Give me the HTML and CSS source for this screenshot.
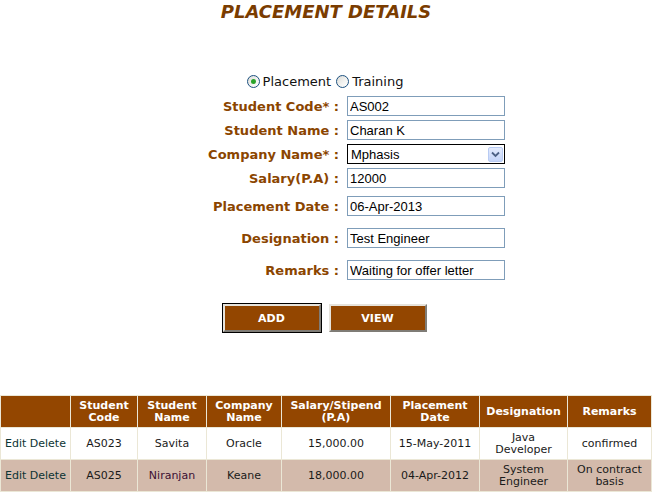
FILE: index.html
```html
<!DOCTYPE html>
<html>
<head>
<meta charset="utf-8">
<link rel="stylesheet" href="styles.css">
</head>
<body>
<h1 class="title">PLACEMENT DETAILS</h1>

<div class="radio-row">
  <span class="radio checked"></span><span class="radio-label">Placement</span>
  <span class="radio"></span><span class="radio-label">Training</span>
</div>

<div class="form">
  <label class="lbl">Student Code* :</label>
  <div class="field"><input class="txt" type="text" value="AS002"></div>

  <label class="lbl">Student Name :</label>
  <div class="field"><input class="txt" type="text" value="Charan K"></div>

  <label class="lbl">Company Name* :</label>
  <div class="field">
    <div class="select">
      <span class="select-text">Mphasis</span>
      <span class="select-btn">
        <svg width="9" height="7" viewBox="0 0 9 7"><path d="M1 1.5 L4.5 5 L8 1.5" fill="none" stroke="#4d6185" stroke-width="1.8"/></svg>
      </span>
    </div>
  </div>

  <label class="lbl">Salary(P.A) :</label>
  <div class="field"><input class="txt" type="text" value="12000"></div>

  <label class="lbl">Placement Date :</label>
  <div class="field"><input class="txt" type="text" value="06-Apr-2013"></div>

  <label class="lbl">Designation :</label>
  <div class="field"><input class="txt" type="text" value="Test Engineer"></div>

  <label class="lbl">Remarks :</label>
  <div class="field"><input class="txt" type="text" value="Waiting for offer letter"></div>
</div>

<div class="buttons">
  <button class="btn focus">ADD</button>
  <button class="btn">VIEW</button>
</div>

<table class="grid">
  <colgroup>
    <col class="c1"><col class="c2"><col class="c3"><col class="c4"><col class="c5"><col class="c6"><col class="c7"><col class="c8">
  </colgroup>
  <thead>
    <tr>
      <th></th>
      <th>Student<br>Code</th>
      <th>Student<br>Name</th>
      <th>Company<br>Name</th>
      <th>Salary/Stipend<br>(P.A)</th>
      <th>Placement<br>Date</th>
      <th>Designation</th>
      <th>Remarks</th>
    </tr>
  </thead>
  <tbody>
    <tr class="row">
      <td class="act">Edit Delete</td>
      <td>AS023</td>
      <td>Savita</td>
      <td>Oracle</td>
      <td>15,000.00</td>
      <td>15-May-2011</td>
      <td>Java<br>Developer</td>
      <td>confirmed</td>
    </tr>
    <tr class="row alt">
      <td class="act">Edit Delete</td>
      <td>AS025</td>
      <td class="visited">Niranjan</td>
      <td>Keane</td>
      <td>18,000.00</td>
      <td>04-Apr-2012</td>
      <td>System<br>Engineer</td>
      <td>On contract<br>basis</td>
    </tr>
  </tbody>
</table>
</body>
</html>
```

FILE: styles.css
```css
html, body {
  margin: 0;
  padding: 0;
  background: #ffffff;
}

body {
  font-family: "DejaVu Sans", Verdana, sans-serif;
  color: #000000;
  width: 652px;
}

.title {
  margin: 1px 0 0 0;
  height: 22px;
  line-height: 22px;
  font-size: 18px;
  font-weight: bold;
  font-style: italic;
  text-align: center;
  color: #7a3c00;
}

.radio-row {
  margin-top: 47px;
  height: 22px;
  display: flex;
  justify-content: center;
  align-items: center;
  font-size: 13px;
  color: #111111;
  padding-left: 3px;
}

.radio {
  width: 11px;
  height: 11px;
  border: 1px solid #1c5180;
  border-radius: 50%;
  background: linear-gradient(135deg, #dcdcd7 0%, #f4f4f2 60%, #ffffff 100%);
  position: relative;
  margin-right: 3px;
}

.radio.checked::after {
  content: "";
  position: absolute;
  left: 3px;
  top: 3px;
  width: 5px;
  height: 5px;
  border-radius: 50%;
  background: #29a329;
}

.radio-label {
  margin-right: 5px;
}

.form {
  margin-top: 2px;
  display: grid;
  grid-template-columns: 339px 158px;
  grid-template-rows: 24px 24px 24px 24px 32px 32px 32px;
  column-gap: 8px;
}

.lbl {
  display: flex;
  align-items: center;
  justify-content: flex-end;
  font-size: 13px;
  font-weight: bold;
  color: #8b4500;
  white-space: nowrap;
}

.field {
  display: flex;
  align-items: center;
}

.txt {
  box-sizing: border-box;
  width: 158px;
  height: 20px;
  margin: 0;
  padding: 0 2px;
  border: 1px solid #7f9db9;
  font-family: "Liberation Sans", Arial, sans-serif;
  font-size: 13px;
  color: #000000;
  background: #ffffff;
  outline: none;
}

.select {
  box-sizing: border-box;
  width: 158px;
  height: 20px;
  border: 1px solid #000000;
  display: flex;
  align-items: center;
  justify-content: space-between;
  padding: 0 1px 0 3px;
  font-family: "Liberation Sans", Arial, sans-serif;
  font-size: 13px;
}

.select-btn {
  width: 15px;
  height: 15px;
  box-sizing: border-box;
  border: 1px solid #b8cbf3;
  border-radius: 2px;
  background: linear-gradient(180deg, #e4ebfd 0%, #c4d4f8 100%);
  display: flex;
  align-items: center;
  justify-content: center;
}

.buttons {
  margin-top: 18px;
  display: flex;
  justify-content: center;
  gap: 8px;
  padding-right: 3px;
}

.btn {
  box-sizing: border-box;
  width: 98px;
  height: 28px;
  margin: 0;
  padding: 0;
  background: #934600;
  color: #ffffff;
  font-family: "DejaVu Sans", Verdana, sans-serif;
  font-size: 11px;
  font-weight: bold;
  border-style: solid;
  border-width: 2px;
  border-color: #e6e3dc #7f7c76 #7f7c76 #e6e3dc;
}

.btn.focus {
  outline: 1px solid #000000;
}

.grid {
  margin-top: 63px;
  width: 651px;
  table-layout: fixed;
  border-collapse: collapse;
  font-size: 11px;
}

.c1 { width: 70px; }
.c2 { width: 67px; }
.c3 { width: 69px; }
.c4 { width: 75px; }
.c5 { width: 109px; }
.c6 { width: 89px; }
.c7 { width: 88px; }
.c8 { width: 84px; }

.grid th, .grid td {
  border: 1px solid #ebe7d6;
  padding: 0 2px;
  text-align: center;
  vertical-align: middle;
  line-height: 12px;
}

.grid th {
  height: 31px;
  background: #934600;
  color: #ffffff;
  font-weight: bold;
}

.grid td {
  height: 31px;
  color: #1a1a1a;
}

.row.alt td {
  background: #d3baab;
}

.grid td.act {
  text-align: left;
  padding-left: 4px;
  color: #0d3434;
  white-space: nowrap;
}

.grid td.visited {
  color: #3b0f33;
}
```
